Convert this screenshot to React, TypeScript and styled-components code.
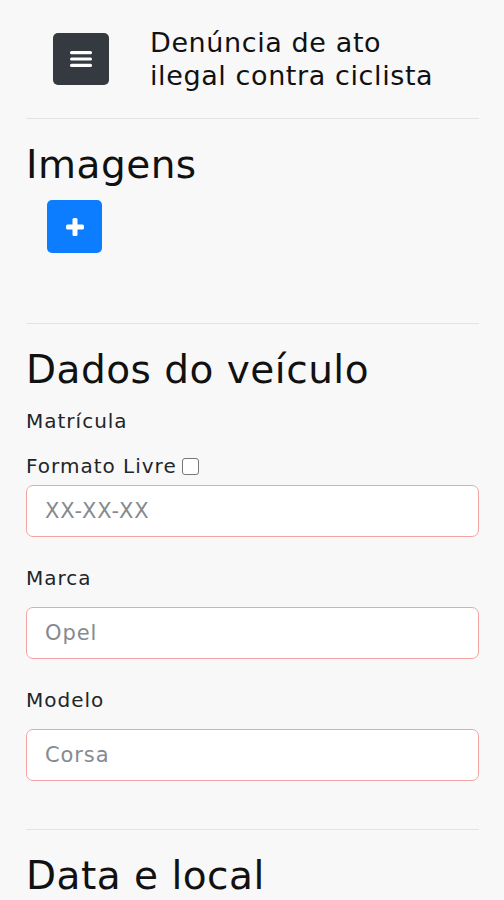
import React from "react";
import styled, { createGlobalStyle } from "styled-components";

const GlobalStyle = createGlobalStyle`
    html, body {
        margin: 0;
        padding: 0;
        background: #f8f8f8;
    }
    body {
        font-family: "DejaVu Sans", "Noto Sans", sans-serif;
        color: #212529;
    }
    * {
        box-sizing: border-box;
    }
`;

const Page = styled.div`
    padding: 0 25px 0 26px;
    height: 900px;
    overflow: hidden;
`;

const Header = styled.div`
    display: flex;
    align-items: center;
    gap: 41px;
    padding: 26px 0 26px 27px;
`;

const MenuButton = styled.button`
    width: 56px;
    height: 52px;
    border: none;
    border-radius: 5px;
    background: #343a40;
    display: flex;
    align-items: center;
    justify-content: center;
    padding: 0;
`;

const Title = styled.h1`
    margin: 0;
    font-size: 27px;
    font-weight: 400;
    line-height: 33px;
    letter-spacing: 0.6px;
    color: #111;
`;

const Divider = styled.hr`
    border: none;
    border-top: 1px solid #e3e3e3;
    margin: 0;
`;

const Section = styled.section<{ $bottom?: number }>`
    padding-top: 22px;
    padding-bottom: ${(p) => p.$bottom ?? 0}px;
`;

const Heading = styled.h2`
    margin: 0;
    font-size: 39px;
    font-weight: 400;
    line-height: 48px;
    letter-spacing: 0.5px;
    color: #111;
`;

const AddButton = styled.button`
    margin: 11px 0 0 21px;
    width: 55px;
    height: 53px;
    border: none;
    border-radius: 5px;
    background: #0d7dff;
    display: flex;
    align-items: center;
    justify-content: center;
    padding: 0;
`;

const Label = styled.label<{ $top?: number }>`
    display: flex;
    align-items: center;
    gap: 5px;
    margin-top: ${(p) => p.$top ?? 0}px;
    font-size: 20px;
    line-height: 28px;
    letter-spacing: 1px;
    color: #212529;
`;

const Field = styled.div`
    display: flex;
    flex-direction: column;
    gap: 15px;
    margin-top: 27px;
`;

const Input = styled.input<{ $top?: number }>`
    width: 100%;
    height: 52px;
    margin-top: ${(p) => p.$top ?? 0}px;
    border: 1.5px solid #f4a3a3;
    border-radius: 7px;
    background: #fff;
    padding: 0 18px;
    font-family: inherit;
    font-size: 21px;
    letter-spacing: 0.9px;
    color: #212529;
    outline: none;
    &::placeholder {
        color: #868a8f;
    }
`;

const CheckBox = styled.span`
    display: inline-block;
    width: 17px;
    height: 17px;
    border: 1.5px solid #777;
    border-radius: 3px;
    background: #fff;
`;

const BarsIcon = () => (
    <svg width="22" height="16" viewBox="0 0 22 16">
        <rect x="0" y="0" width="22" height="3.2" rx="1.5" fill="#fff" />
        <rect x="0" y="6.4" width="22" height="3.2" rx="1.5" fill="#fff" />
        <rect x="0" y="12.8" width="22" height="3.2" rx="1.5" fill="#fff" />
    </svg>
);

const PlusIcon = () => (
    <svg width="18" height="18" viewBox="0 0 18 18">
        <rect x="6.5" y="0" width="5" height="18" rx="1.5" fill="#fff" />
        <rect x="0" y="6.5" width="18" height="5" rx="1.5" fill="#fff" />
    </svg>
);

const App: React.FC = () => {
    return (
        <>
            <GlobalStyle />
            <Page>
                <Header>
                    <MenuButton aria-label="menu">
                        <BarsIcon />
                    </MenuButton>
                    <Title>
                        Denúncia de ato
                        <br />
                        ilegal contra ciclista
                    </Title>
                </Header>
                <Divider />
                <Section $bottom={70}>
                    <Heading>Imagens</Heading>
                    <AddButton aria-label="adicionar imagem">
                        <PlusIcon />
                    </AddButton>
                </Section>
                <Divider />
                <Section $bottom={48}>
                    <Heading>Dados do veículo</Heading>
                    <Label $top={13}>Matrícula</Label>
                    <Label $top={17}>
                        Formato Livre <CheckBox />
                    </Label>
                    <Input $top={5} placeholder="XX-XX-XX" />
                    <Field>
                        <Label>Marca</Label>
                        <Input placeholder="Opel" />
                    </Field>
                    <Field>
                        <Label>Modelo</Label>
                        <Input placeholder="Corsa" />
                    </Field>
                </Section>
                <Divider />
                <Section>
                    <Heading>Data e local</Heading>
                </Section>
            </Page>
        </>
    );
};

export default App;
